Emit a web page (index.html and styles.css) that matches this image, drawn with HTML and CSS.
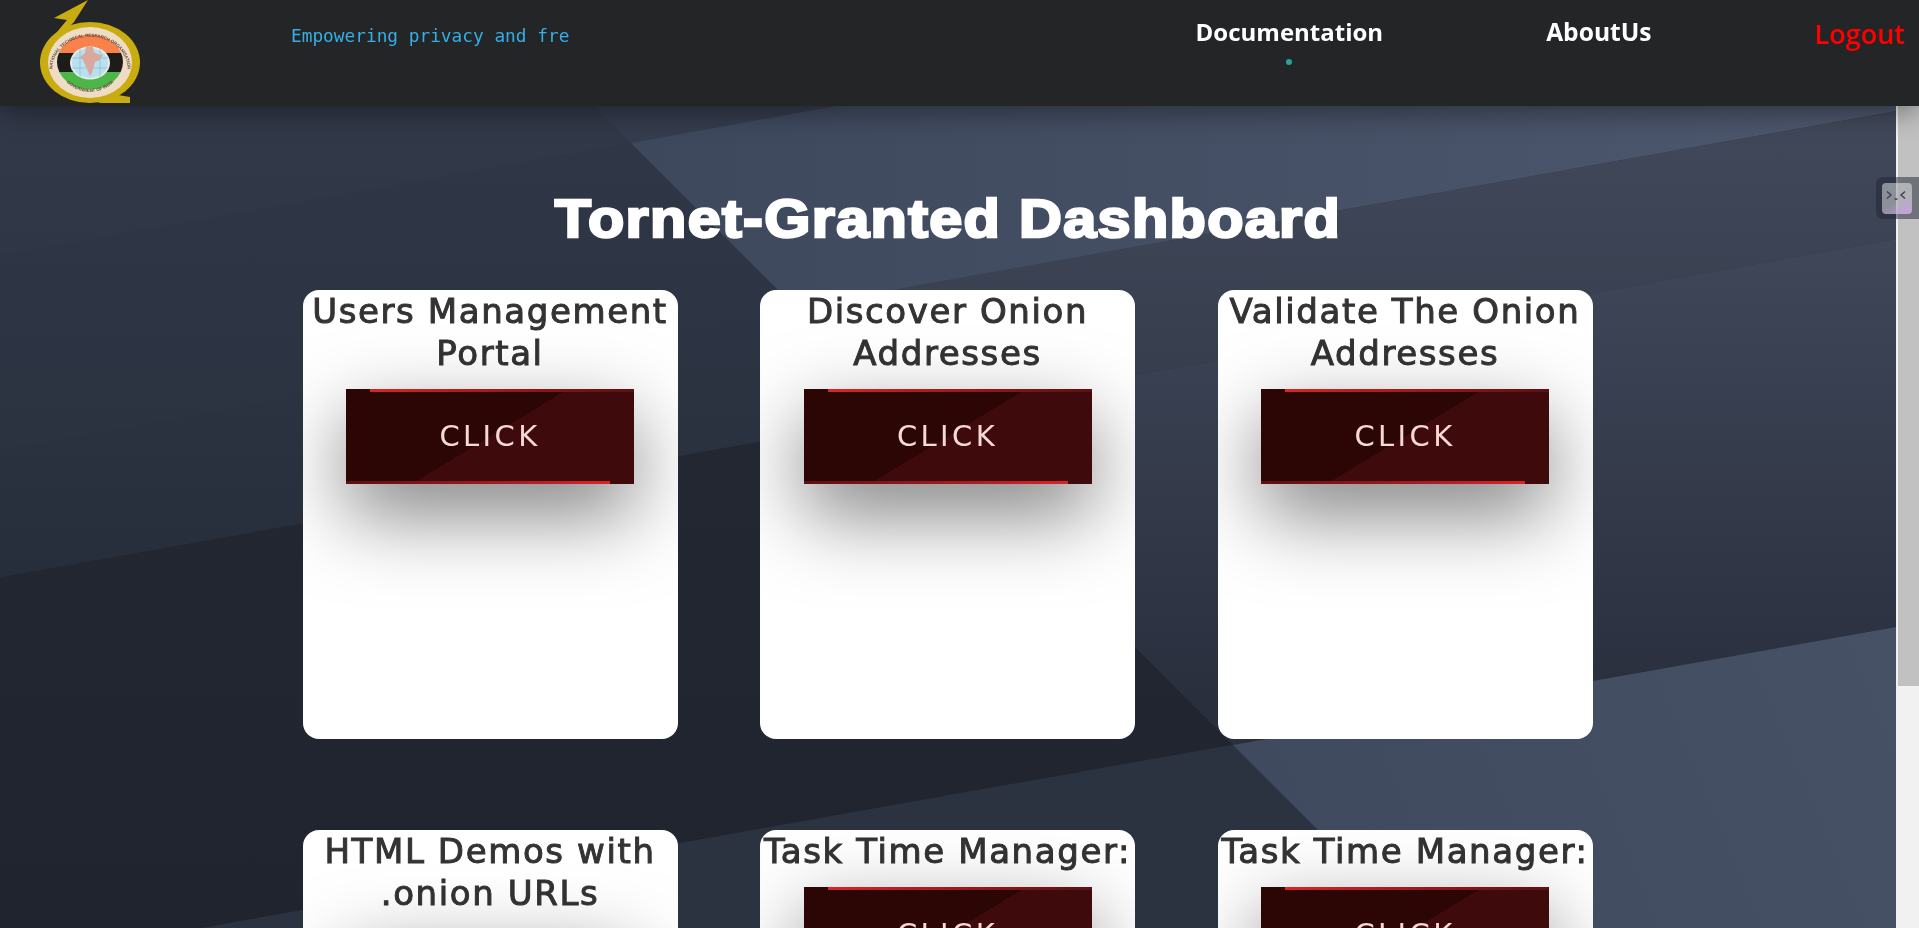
FILE: index.html
```html
<!DOCTYPE html>
<html lang="en">
<head>
<meta charset="utf-8">
<title>Tornet-Granted Dashboard</title>
<link rel="stylesheet" href="styles.css">
</head>
<body>
<svg class="backdrop" viewBox="0 0 1919 928" preserveAspectRatio="none" aria-hidden="true">
  <defs>
    <linearGradient id="lt" gradientUnits="userSpaceOnUse" x1="0" y1="100" x2="0" y2="260"><stop offset="0" stop-color="#323949"/><stop offset="1" stop-color="#2f3646"/></linearGradient>
    <linearGradient id="ab" gradientUnits="userSpaceOnUse" x1="0" y1="150" x2="0" y2="450"><stop offset="0" stop-color="#2f3646"/><stop offset="1" stop-color="#2b3240"/></linearGradient>
    <linearGradient id="bc" gradientUnits="userSpaceOnUse" x1="0" y1="300" x2="0" y2="580"><stop offset="0" stop-color="#2d3443"/><stop offset="1" stop-color="#272e3b"/></linearGradient>
    <linearGradient id="cd" gradientUnits="userSpaceOnUse" x1="0" y1="450" x2="0" y2="950"><stop offset="0" stop-color="#222731"/><stop offset="1" stop-color="#1f242e"/></linearGradient>
    <linearGradient id="rab" gradientUnits="userSpaceOnUse" x1="620" y1="0" x2="1800" y2="0"><stop offset="0" stop-color="#3d485d"/><stop offset="1" stop-color="#4c566c"/></linearGradient>
    <linearGradient id="rbc" gradientUnits="userSpaceOnUse" x1="0" y1="120" x2="0" y2="416"><stop offset="0" stop-color="#414859"/><stop offset="1" stop-color="#353c4c"/></linearGradient>
    <linearGradient id="rcd" gradientUnits="userSpaceOnUse" x1="0" y1="240" x2="0" y2="700"><stop offset="0" stop-color="#404759"/><stop offset="1" stop-color="#292f3d"/></linearGradient>
    <linearGradient id="rbelow" gradientUnits="userSpaceOnUse" x1="1200" y1="928" x2="1897" y2="640"><stop offset="0" stop-color="#3e495d"/><stop offset="1" stop-color="#465166"/></linearGradient>
  </defs>
  <rect width="1919" height="928" fill="url(#lt)"/>
  <polygon points="0,255 1919,-87 1919,107 0,449" fill="url(#ab)"/>
  <polygon points="0,449 1919,107 1919,235 0,577" fill="url(#bc)"/>
  <polygon points="0,577 1919,235 1919,623 0,964" fill="url(#cd)"/>
  <polygon points="0,964 1919,623 1919,928 0,928" fill="#2b3240"/>
  <polygon points="594,106 842,106 631,143" fill="#353c4d"/>
  <polygon points="631,143 842,105 1919,105 1919,107 795.5,307.5" fill="url(#rab)"/>
  <polygon points="795.5,307.5 1919,107 1919,235 904,416" fill="url(#rbc)"/>
  <polygon points="904,416 1919,235 1919,623 1233,745" fill="url(#rcd)"/>
  <polygon points="1233,745 1919,623 1919,928 1416,928" fill="url(#rbelow)"/>
</svg>

<header class="topbar">
  <svg class="logo" viewBox="0 0 102 104" role="img" aria-label="National Technical Research Organisation emblem">
    <defs>
      <clipPath id="inner"><ellipse cx="50" cy="62" rx="33" ry="27.5"/></clipPath>
      <path id="arcTop" d="M13 74 A37.5 32 0 1 1 87 74"/>
      <path id="arcBot" d="M23 78 A32 30 0 0 0 77 78"/>
    </defs>
    <ellipse cx="50" cy="62.5" rx="50" ry="40.5" fill="#c9ad10"/>
    <path d="M48 0 L14 18 L27 20 L12 38 L30 26 L34 22 Z" fill="#c9ad10"/>
    <path d="M58 103 L90 103 L90 97 L78 95 Z" fill="#c9ad10"/>
    <ellipse cx="50" cy="62.5" rx="42" ry="35.5" fill="#efdcc4"/>
    <g clip-path="url(#inner)">
      <rect x="10" y="30" width="80" height="23" fill="#f9824a"/>
      <rect x="10" y="53" width="80" height="19" fill="#1e1c1a"/>
      <rect x="10" y="72" width="80" height="20" fill="#4db648"/>
    </g>
    <ellipse cx="50" cy="63" rx="20" ry="16.5" fill="#e6eee8"/>
    <ellipse cx="50" cy="63" rx="18" ry="15" fill="#b9dff0"/>
    <path d="M32 58H68M32 68H68M40 49V77M60 49V77" stroke="#7fb6cf" stroke-width=".6" fill="none"/>
    <path d="M46 47 L53 47 L54 52 L60 55 L63 54 L60 60 L55 62 L52 73 L50 76 L47 69 L43 60 L40 57 L45 53 Z" fill="#d9a9a0"/>
    <text class="logo-ring"><textPath href="#arcTop" startOffset="50%" text-anchor="middle">NATIONAL TECHNICAL RESEARCH ORGANISATION</textPath></text>
    <text class="logo-ring"><textPath href="#arcBot" startOffset="50%" text-anchor="middle">GOVERNMENT OF INDIA</textPath></text>
  </svg>
  <p class="tagline">Empowering privacy and fre</p>
  <nav class="nav">
    <a class="nav-link nav-current" href="#">Documentation</a>
    <a class="nav-link nav-about" href="#">AboutUs</a>
    <a class="nav-link nav-logout" href="#">Logout</a>
  </nav>
</header>

<div class="workspace">
  <main class="content">
    <h1 class="page-title">Tornet-Granted Dashboard</h1>
    <section class="cards">
      <article class="card"><h2 class="card-title">Users Management Portal</h2><a class="btn" href="#">CLICK</a></article>
      <article class="card"><h2 class="card-title">Discover Onion Addresses</h2><a class="btn" href="#">CLICK</a></article>
      <article class="card"><h2 class="card-title">Validate The Onion Addresses</h2><a class="btn" href="#">CLICK</a></article>
      <article class="card"><h2 class="card-title">HTML Demos with .onion URLs</h2><a class="btn" href="#">CLICK</a></article>
      <article class="card"><h2 class="card-title">Task Time Manager:</h2><a class="btn" href="#">CLICK</a></article>
      <article class="card"><h2 class="card-title">Task Time Manager:</h2><a class="btn" href="#">CLICK</a></article>
    </section>
  </main>
  <div class="scrollbar" aria-hidden="true"><div class="scrollbar-thumb"></div></div>
</div>

<aside class="widget" aria-label="Assistant">
  <div class="widget-face">
    <svg viewBox="0 0 30 31" width="30" height="31" aria-hidden="true">
      <path d="M5 8.5 L9 12 L5 15.5M23 8.5 L19 12 L23 15.5" fill="none" stroke="#3c4458" stroke-width="1.5"/>
      <path d="M12.5 15.5 Q14 17 15.5 15.5" fill="none" stroke="#3c4458" stroke-width="1.3"/>
    </svg>
  </div>
</aside>
</body>
</html>
```
FILE: styles.css
```css
* { box-sizing: border-box; }

html, body {
  height: 100%;
  margin: 0;
  overflow: hidden;
}

body {
  display: flex;
  flex-direction: column;
  background: #2b3240;
  font-family: "DejaVu Sans", sans-serif;
}

.backdrop {
  position: fixed;
  inset: 0;
  width: 100%;
  height: 100%;
  z-index: 0;
}

.topbar {
  position: relative;
  z-index: 2;
  flex: 0 0 106px;
  display: flex;
  align-items: flex-start;
  padding: 0 14px 0 40px;
  background: #242527;
  box-shadow: 0 6px 26px rgba(0, 0, 0, 0.4);
}

.logo {
  flex: 0 0 102px;
  width: 102px;
  height: 104px;
}

.logo-ring {
  font-family: "Liberation Sans", sans-serif;
  font-size: 4.4px;
  font-weight: 700;
  fill: #5a4a3a;
}

.tagline {
  margin: 25px 0 0 149px;
  font-family: "DejaVu Sans Mono", monospace;
  font-size: 17.8px;
  line-height: 22px;
  color: #35aee6;
  white-space: nowrap;
}

.nav {
  display: flex;
  align-items: flex-start;
  margin-left: auto;
}

.nav-link {
  position: relative;
  font-family: "Open Sans", sans-serif;
  font-size: 24px;
  line-height: 32px;
  font-weight: 700;
  color: #fff;
  text-decoration: none;
  white-space: nowrap;
  margin-top: 16px;
}

.nav-current::after {
  content: "";
  position: absolute;
  left: 50%;
  top: 43px;
  width: 6px;
  height: 6px;
  margin-left: -3px;
  border-radius: 50%;
  background: #25a59a;
}

.nav-about {
  margin-left: 163px;
  font-size: 24.6px;
}

.nav-logout {
  margin-left: 163px;
  margin-top: 18px;
  font-size: 27px;
  font-weight: 600;
  color: #ff0000;
}

.workspace {
  position: relative;
  z-index: 1;
  flex: 1 1 auto;
  min-height: 0;
  display: flex;
}

.content {
  flex: 1 1 auto;
  min-width: 0;
  overflow-y: auto;
  scrollbar-width: none;
}

.scrollbar {
  flex: 0 0 23px;
  background: #f1f1f1;
}

.scrollbar-thumb {
  height: 580px;
  margin-left: 2px;
  background: #c1c1c1;
}

.page-title {
  margin: 0;
  padding-top: 76px;
  height: 184px;
  font-family: "Liberation Sans", Arial, sans-serif;
  font-size: 54px;
  line-height: 72px;
  font-weight: 700;
  letter-spacing: 1.2px;
  -webkit-text-stroke: 2.5px #fff;
  color: #fff;
  text-align: center;
  transform: scaleX(1.1);
}

.cards {
  display: grid;
  grid-template-columns: repeat(3, 375px);
  justify-content: center;
  column-gap: 82.5px;
  row-gap: 90px;
  padding-right: 1px;
}

.card {
  height: 449px;
  margin-bottom: 1px;
  display: flex;
  flex-direction: column;
  align-items: center;
  overflow: hidden;
  border-radius: 16px;
  background: #fff;
}

.card-title {
  margin: 0 0 15px;
  width: 100%;
  font-size: 34px;
  line-height: 42px;
  font-weight: 400;
  letter-spacing: 1.6px;
  -webkit-text-stroke: 1px #333;
  color: #333;
  text-align: center;
}

.btn {
  position: relative;
  flex: 0 0 95px;
  width: 288px;
  display: flex;
  align-items: center;
  justify-content: center;
  padding-bottom: 2px;
  background: linear-gradient(148.8deg, #2c0505 50%, #3f0a0c 50%);
  box-shadow: 0 30px 80px rgba(0, 0, 0, 0.5);
  font-size: 29px;
  letter-spacing: 3.4px;
  color: #f6d8d6;
  text-decoration: none;
}

.btn::before,
.btn::after {
  content: "";
  position: absolute;
  height: 3px;
}

.btn::before {
  top: 0;
  left: 24px;
  right: 0;
  background: linear-gradient(to right, #d92527, #5c0f12);
}

.btn::after {
  bottom: 0;
  left: 0;
  right: 24px;
  background: linear-gradient(to left, #d92527, #5c0f12);
}

.widget {
  position: fixed;
  top: 177px;
  right: 0;
  width: 43px;
  height: 42px;
  z-index: 3;
  padding: 6px 0 0 6px;
  border-radius: 7px 0 0 7px;
  background: rgba(30, 35, 50, 0.5);
}

.widget-face {
  width: 30px;
  height: 31px;
  border-radius: 4px;
  background: linear-gradient(150deg, rgba(255, 255, 255, 0.45) 55%, rgba(205, 165, 235, 0.9));
}
```
